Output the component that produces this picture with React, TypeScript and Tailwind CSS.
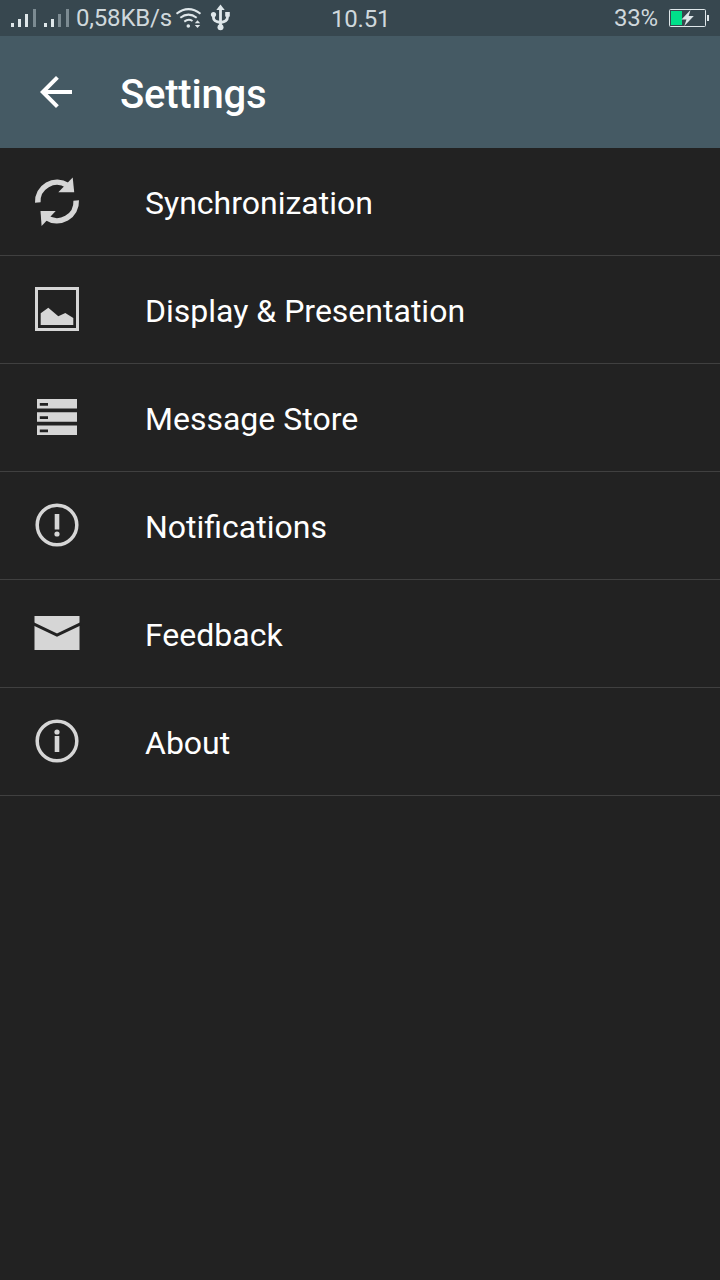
import type { ReactNode } from "react";

const ITEMS: { label: string; icon: ReactNode }[] = [
  {
    label: "Synchronization",
    icon: (
      <>
        <path d="M4.8 24.5A19.2 19.2 0 0 1 34.5 7.4" fill="none" stroke="currentColor" strokeWidth="5.6" />
        <path d="M25.3 14.2L39.7 -.4L41.2 14.2Z" />
        <path d="M43.2 22.5A19.2 19.2 0 0 1 13.5 39.6" fill="none" stroke="currentColor" strokeWidth="5.6" />
        <path d="M22.7 33L8.6 48L7.5 33Z" />
      </>
    ),
  },
  {
    label: "Display & Presentation",
    icon: (
      <>
        <rect x="3.5" y="2.5" width="41" height="41" fill="none" stroke="currentColor" strokeWidth="3" />
        <path d="M7.7 27.3L15.3 21.7L25.3 30.3L32.3 27L40.3 32V39H7.7Z" />
      </>
    ),
  },
  {
    label: "Message Store",
    icon: (
      <>
        <path d="M4 5H44V14.5H4ZM4 18.3H44V27.8H4ZM4 31.5H44V41H4Z" />
        <path d="M6.8 9H15V11.7H6.8ZM6.8 22.2H15V24.9H6.8ZM6.8 35.5H15V38.2H6.8Z" fill="#222" />
      </>
    ),
  },
  {
    label: "Notifications",
    icon: (
      <>
        <circle cx="24" cy="23" r="19.8" fill="none" stroke="currentColor" strokeWidth="3.5" />
        <rect x="21.7" y="12" width="4.6" height="15.5" />
        <circle cx="24" cy="32" r="2.6" />
      </>
    ),
  },
  {
    label: "Feedback",
    icon: (
      <>
        <rect x="1.5" y="6" width="45" height="34" />
        <path d="M0 13.6L24 25L48 13.6" fill="none" stroke="#222" strokeWidth="3" />
      </>
    ),
  },
  {
    label: "About",
    icon: (
      <>
        <circle cx="24" cy="23" r="19.8" fill="none" stroke="currentColor" strokeWidth="3.5" />
        <circle cx="24" cy="14" r="2.6" />
        <rect x="21.7" y="18" width="4.6" height="16" />
      </>
    ),
  },
];

function StatusBar() {
  return (
    <div className="grid h-9 grid-cols-[331px_1fr_auto] items-start bg-[#37474f] text-2xl leading-9 tracking-[-0.2px] text-[#cfd8dc]">
      <div className="flex h-9 items-start">
        <svg className="h-9 w-[76px] shrink-0" viewBox="0 0 76 36" fill="#dfe7ea">
          <path d="M11 23H14V27H11ZM18 19H21V27H18ZM25 14H28V27H25ZM44 23H47V27H44ZM51 19H54V27H51Z" />
          <path d="M33 9H36V27H33ZM58 14H61V27H58ZM66 9H69V27H66Z" fill="#7c8b92" />
        </svg>
        <span className="w-[98px] whitespace-nowrap">0,58KB/s</span>
        <svg className="h-9 w-[60px] shrink-0" viewBox="0 0 60 36" fill="none" stroke="#dfe7ea">
          <path d="M2.5 13.8Q14.5 4.5 26.5 13.8M6.3 17.8Q14.5 11.5 22.7 17.8M10.3 21.6Q14.5 18.4 18.5 21" strokeWidth="2" />
          <circle cx="14.3" cy="26" r="1.8" fill="#dfe7ea" stroke="none" />
          <path d="M20.8 23.3L23.5 20.3L26.2 23.3ZM20.8 25L23.5 28L26.2 25Z" fill="#dfe7ea" stroke="none" />
          <path d="M46.5 8V28M39.5 14V18Q39.5 21.5 46.5 22.5Q53.5 21.5 53.5 17V13" strokeWidth="2.8" />
          <path d="M42.3 10L46.5 4.5L50.7 10Z" fill="#dfe7ea" stroke="none" />
          <path d="M51.2 12H55.8V16.6H51.2Z" fill="#dfe7ea" stroke="none" />
          <circle cx="39.5" cy="14.5" r="2.6" fill="#dfe7ea" stroke="none" />
          <circle cx="46.5" cy="27.2" r="3" fill="#dfe7ea" stroke="none" />
        </svg>
      </div>
      <span className="pt-px">10.51</span>
      <div className="flex items-start pr-2.5">
        <span className="w-[54px]">33%</span>
        <svg className="h-9 w-[42px]" viewBox="0 0 42 36">
          <rect x="1.5" y="9.5" width="36" height="17" rx="1" fill="none" stroke="#dfe7ea" />
          <rect x="3" y="11" width="11" height="14" fill="#00e08a" />
          <path d="M22.5 10L13.5 19.5H18.5L16.3 26L25.8 16H20.7Z" fill="#dfe7ea" />
          <rect x="39" y="15" width="2" height="6" fill="#dfe7ea" />
        </svg>
      </div>
    </div>
  );
}

export default function App() {
  return (
    <div className="flex h-[1280px] w-[720px] flex-col overflow-hidden bg-[#222] font-['Roboto',sans-serif]">
      <StatusBar />
      <header className="flex h-28 items-center bg-[#455a64] text-white">
        <svg className="ml-8 h-12 w-12" viewBox="0 0 24 24" fill="currentColor">
          <path d="M20 11H7.83l5.59-5.59L12 4l-8 8 8 8 1.41-1.41L7.83 13H20v-2z" />
        </svg>
        <h1 className="ml-10 pt-1.5 text-[40px] font-medium leading-none tracking-[-0.2px]">Settings</h1>
      </header>
      <ul>
        {ITEMS.map((item) => (
          <li key={item.label} className="flex h-[108px] items-start border-b border-[#404040] pl-[33px]">
            <svg
              className="mt-[30px] h-12 w-12 shrink-0 overflow-visible text-[#d6d6d6]"
              viewBox="0 0 48 48"
              fill="currentColor"
            >
              {item.icon}
            </svg>
            <span className="ml-16 mt-[35px] text-[32px] leading-10 text-white">{item.label}</span>
          </li>
        ))}
      </ul>
    </div>
  );
}
